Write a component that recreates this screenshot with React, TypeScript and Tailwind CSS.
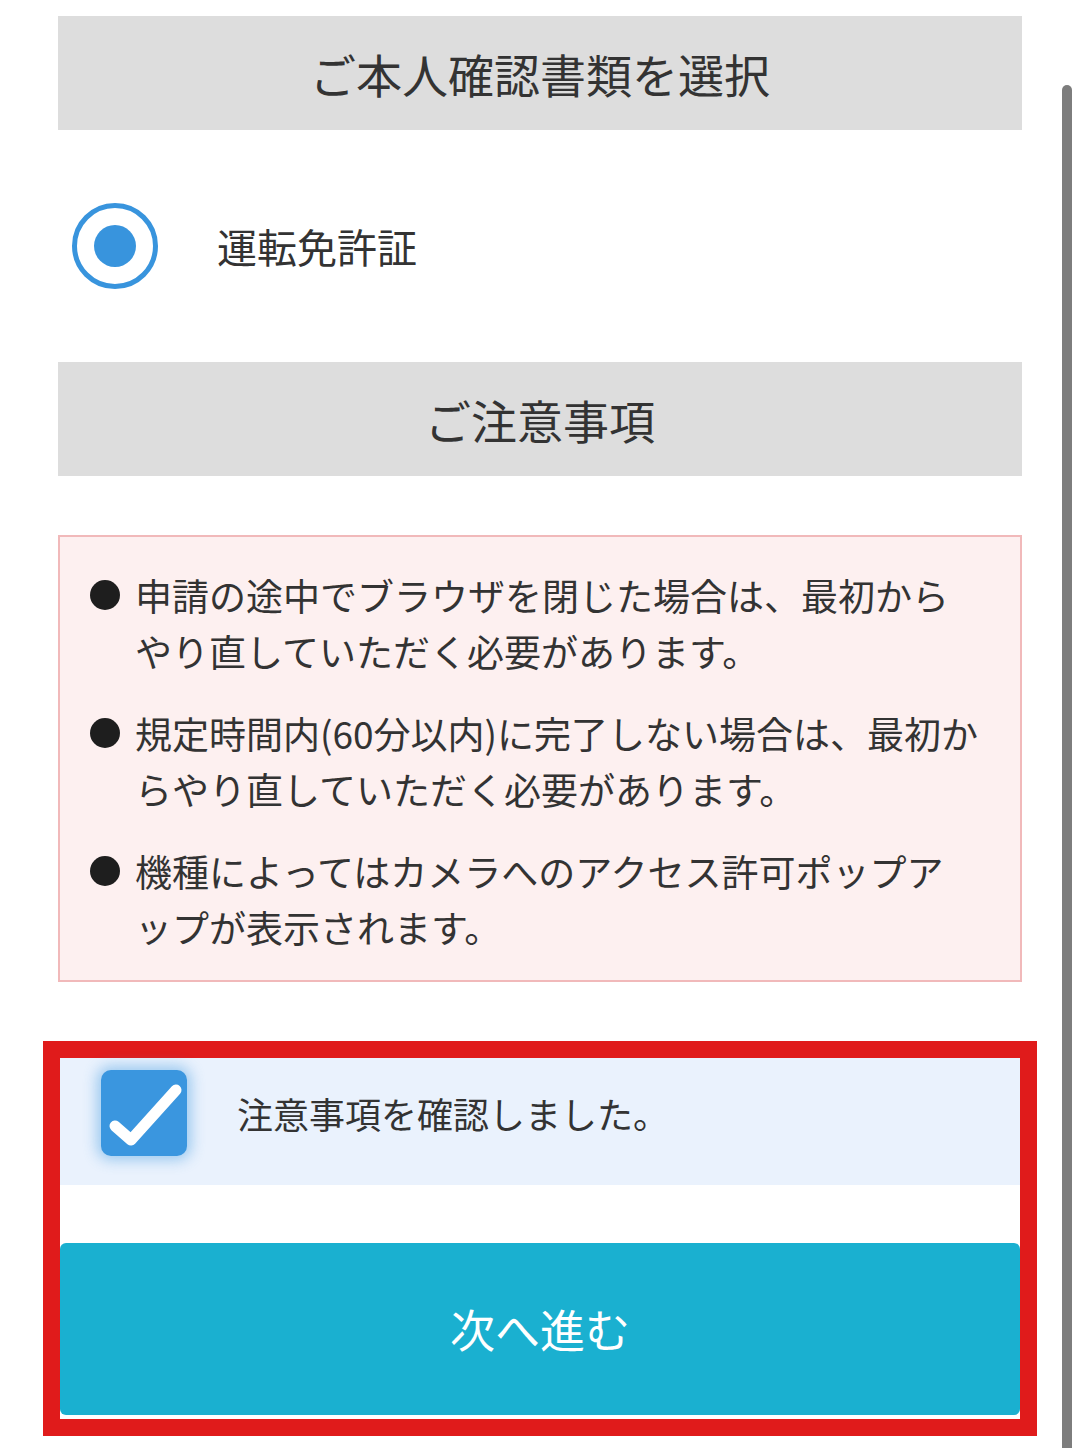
import React from "react";

const font = { fontFamily: '"Noto Sans CJK JP", "Noto Sans", sans-serif' };

function Bullet({ lines }: { lines: string[] }) {
  return (
    <div className="flex">
      <div className="w-[75px] shrink-0 pl-[30px] pt-[13px]">
        <div className="w-[30px] h-[30px] rounded-full bg-[#1e1e1e]" />
      </div>
      <div className="text-[37px] leading-[56px] text-[#333333]">
        {lines.map((l, i) => (
          <div key={i} className="whitespace-nowrap">{l}</div>
        ))}
      </div>
    </div>
  );
}

export default function App() {
  return (
    <div className="relative w-[1080px] h-[1448px] bg-white overflow-hidden" style={font}>
      <div className="absolute right-[8px] top-[85px] bottom-0 w-[10px] rounded-t-full bg-[#7d7d7d]" />
      <div className="pt-[16px]">
        <div className="mx-[58px] h-[114px] bg-[#dddddd] flex items-center justify-center text-[46px] text-[#333333]">
          ご本人確認書類を選択
        </div>

        <div className="mx-[58px] mt-[73px] h-[86px] flex items-center">
          <div className="ml-[14px] w-[86px] h-[86px] rounded-full border-[5px] border-[#3894dd] flex items-center justify-center">
            <div className="w-[42px] h-[42px] rounded-full bg-[#3894dd]" />
          </div>
          <div className="ml-[59px] text-[40px] text-[#333333]">運転免許証</div>
        </div>

        <div className="mx-[58px] mt-[73px] h-[114px] bg-[#dddddd] flex items-center justify-center text-[46px] text-[#333333]">
          ご注意事項
        </div>

        <div className="mx-[58px] mt-[59px] h-[447px] border-2 border-[#f1b9ba] bg-[#fdf0f0] pt-[30px] flex flex-col gap-[26px]">
          <Bullet lines={["申請の途中でブラウザを閉じた場合は、最初から", "やり直していただく必要があります。"]} />
          <Bullet lines={["規定時間内(60分以内)に完了しない場合は、最初か", "らやり直していただく必要があります。"]} />
          <Bullet lines={["機種によってはカメラへのアクセス許可ポップア", "ップが表示されます。"]} />
        </div>

        <div className="ml-[43px] mt-[59px] w-[994px] h-[395px] border-[17px] border-[#e01b1b] bg-white flex flex-col">
          <div className="h-[127px] bg-[#eaf2fd] flex items-start pt-[12px]">
            <div className="ml-[41px] w-[86px] h-[86px] rounded-[10px] bg-[#3a96df] shadow-[0_0_14px_4px_rgba(58,150,223,0.45)] flex items-center justify-center">
              <svg width="86" height="86" viewBox="0 0 86 86">
                <path d="M14 56 L30 70 L75 20" fill="none" stroke="white" strokeWidth="11" strokeLinecap="round" strokeLinejoin="round" />
              </svg>
            </div>
            <div className="ml-[50px] h-[86px] flex items-center text-[36px] text-[#333333]">注意事項を確認しました。</div>
          </div>
          <div className="mt-[58px] h-[172px] rounded-[6px] bg-[#1ab0d0] flex items-center justify-center text-[45px] text-white">
            次へ進む
          </div>
        </div>
      </div>
    </div>
  );
}
